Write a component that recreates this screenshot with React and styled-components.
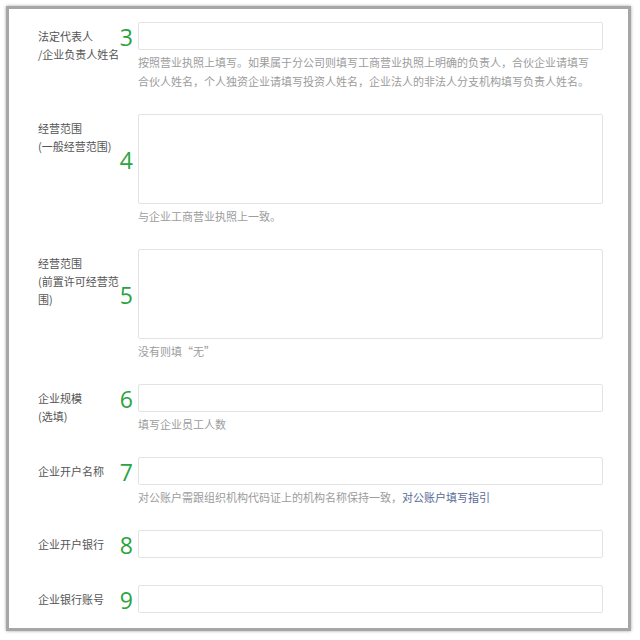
import React from "react";
import styled, { createGlobalStyle } from "styled-components";

const GlobalStyle = createGlobalStyle`
  html, body {
    margin: 0;
    padding: 0;
    background: #ffffff;
  }
  body {
    font-family: "Noto Sans CJK SC", "Noto Sans", sans-serif;
  }
`;

const Frame = styled.div`
  box-sizing: border-box;
  margin: 6px 9px 9px 6px;
  width: 625px;
  height: 625px;
  border: 3px solid #a6a6a6;
  box-shadow: 0 0 3px rgba(0, 0, 0, 0.35);
  background: #fff;
  padding: 13px 0 0 29px;
  overflow: hidden;
`;

const Row = styled.div`
  display: grid;
  grid-template-columns: 86px 14px 465px;
  grid-template-rows: auto auto;
  margin-bottom: ${(p) => (p.$last ? 0 : p.$bare ? 27 : 23)}px;
`;

const Label = styled.div`
  grid-column: 1;
  grid-row: 1 / span 2;
  padding-top: 5px;
  font-size: 11px;
  line-height: 18px;
  color: #555;
`;

const Num = styled.div`
  grid-column: 2;
  grid-row: 1;
  align-self: center;
  display: flex;
  justify-content: flex-end;
  padding-right: 5px;
  font-family: "Open Sans", "Noto Sans", sans-serif;
  font-size: 23px;
  line-height: 1;
  color: #2aa443;
  white-space: nowrap;
  margin-top: 3px;
`;

const Input = styled.div`
  grid-column: 3;
  grid-row: 1;
  box-sizing: border-box;
  height: ${(p) => (p.$tall ? 90 : 28)}px;
  border: 1px solid #e3e3e3;
  border-radius: 2px;
  background: #fff;
`;

const Hint = styled.div`
  grid-column: 3;
  grid-row: 2;
  margin-top: 3px;
  font-size: 11px;
  line-height: 19px;
  color: #9c9c9c;
`;

const HintLine = styled.div`
  white-space: nowrap;
`;

const Link = styled.a`
  color: #576b95;
  text-decoration: none;
`;

const fields = [
  {
    n: 3,
    label: ["法定代表人", "/企业负责人姓名"],
    hint: [
      "按照营业执照上填写。如果属于分公司则填写工商营业执照上明确的负责人，合伙企业请填写",
      "合伙人姓名，个人独资企业请填写投资人姓名，企业法人的非法人分支机构填写负责人姓名。",
    ],
  },
  { n: 4, label: ["经营范围", "(一般经营范围)"], tall: true, hint: ["与企业工商营业执照上一致。"] },
  { n: 5, label: ["经营范围", "(前置许可经营范", "围)"], tall: true, hint: ["没有则填“无”"] },
  { n: 6, label: ["企业规模", "(选填)"], hint: ["填写企业员工人数"] },
  {
    n: 7,
    label: ["企业开户名称"],
    hint: [
      <>
        对公账户需跟组织机构代码证上的机构名称保持一致，<Link>对公账户填写指引</Link>
      </>,
    ],
  },
  { n: 8, label: ["企业开户银行"] },
  { n: 9, label: ["企业银行账号"] },
];

export default function App() {
  return (
    <>
      <GlobalStyle />
      <Frame>
        {fields.map((f, i) => (
          <Row key={f.n} $bare={!f.hint} $last={i === fields.length - 1}>
            <Label>
              {f.label.map((l) => (
                <div key={l}>{l}</div>
              ))}
            </Label>
            <Num>{f.n}</Num>
            <Input $tall={f.tall} />
            {f.hint && (
              <Hint>
                {f.hint.map((h, j) => (
                  <HintLine key={j}>{h}</HintLine>
                ))}
              </Hint>
            )}
          </Row>
        ))}
      </Frame>
    </>
  );
}
